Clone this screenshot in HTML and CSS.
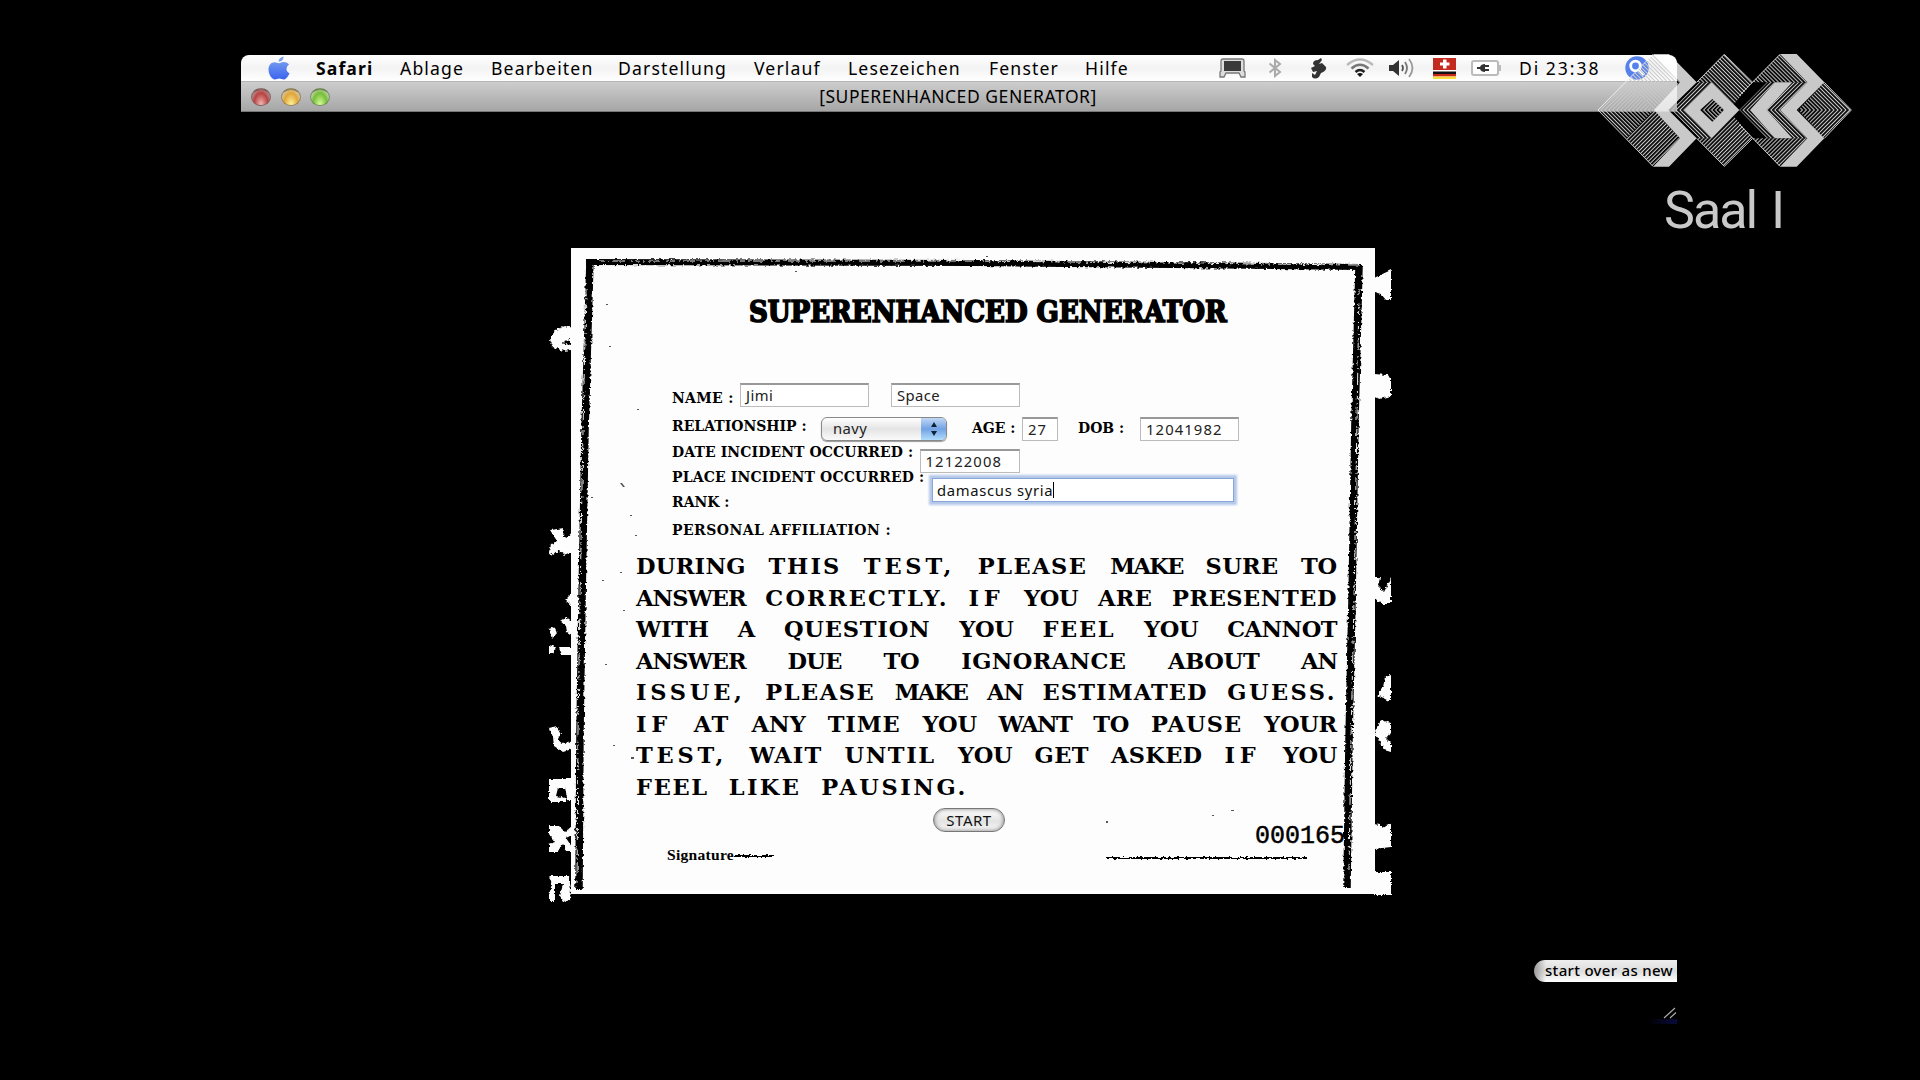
FILE: index.html
```
<!DOCTYPE html>
<html lang="de">
<head>
<meta charset="utf-8">
<title>[SUPERENHANCED GENERATOR]</title>
<link rel="stylesheet" href="styles.css">
</head>
<body>
<div class="screen">
  <header class="menubar">
    <svg class="apple" viewBox="0 0 22 24"><defs><linearGradient id="ap" x2="0" y2="1"><stop offset="0" stop-color="#7fa8ef"/><stop offset="1" stop-color="#3c63ee"/></linearGradient></defs><path fill="url(#ap)" d="M15.500 0.500C15.800 3.500 13.500 5.700 10.700 5.700 10.600 3 12.900 1 15.500 0.500ZM11 7.200C12.500 7.200 13.700 6 16 6 18 6 20 7 21 8.700 17.500 10.700 17.800 15.600 21.500 17.200 20.300 20.300 18 23.500 15.700 23.500 14 23.500 13.200 22.600 11.300 22.600 9.300 22.600 8.600 23.500 6.900 23.500 3.700 23.500 0.500 18 0.500 13.500 0.500 9 3.300 6.200 6.400 6.200 8.400 6.200 9.700 7.200 11 7.200Z"/></svg>
    <nav class="menus"><b>Safari</b><span>Ablage</span><span>Bearbeiten</span><span>Darstellung</span><span>Verlauf</span><span>Lesezeichen</span><span>Fenster</span><span>Hilfe</span></nav>
    <div class="status">
      <svg width="27" height="20" viewBox="0 0 27 20"><path fill="#ddd" stroke="#777" stroke-width="1.300" d="M4 1H23Q25 1 25 3V13L26 14V19H22L20 15H7L5 19H1V14L2 13V3Q2 1 4 1Z"/><path fill="#3a3a3a" d="M5 3H22V13H5Z"/></svg>
      <svg width="14" height="20" viewBox="0 0 14 20"><path fill="none" stroke="#aaa" stroke-width="2" d="M1.500 5.500 12 14 7 18V2L12 6 1.500 14.500"/></svg>
      <svg width="17" height="21" viewBox="0 0 17 21"><path fill="#333" d="M3 6Q3 2 8 2L11 0 12 2 9 6 12 5 16 9Q17 13 11 15L9 19Q5 22 2 19L2 15 5 17 7 13 3 14 1 10 5 8Z"/></svg>
      <svg width="30" height="20" viewBox="0 0 30 20"><g fill="none" stroke-width="2.500"><path stroke="#bbb" d="M2 7Q15-4 28 7"/><path stroke="#777" d="M6.500 10.500Q15 3 23.500 10.500"/><path stroke="#222" d="M10.500 14Q15 10 19.500 14"/></g><path fill="#111" d="M12 16Q15 14 18 16L15 19Z"/></svg>
      <svg width="26" height="22" viewBox="0 0 26 22"><path fill="#333" d="M0 8H4L10 3V19L4 14H0Z"/><g fill="none" stroke="#555" stroke-width="1.800"><path d="M13 8Q15 11 13 14"/><path stroke="#777" d="M16 5Q20 11 16 17"/><path stroke="#999" d="M20 2Q27 11 20 20"/></g></svg>
      <svg width="23" height="21" viewBox="0 0 23 21"><path fill="#c32b20" d="M0 0H23V12H0Z"/><path fill="#fff" d="M10 1.500H13.500V4.500H16.500V7.500H13.500V10.500H10V7.500H7V4.500H10Z"/><path fill="#fff" d="M0 12H23V13.500H0Z"/><path fill="#111" d="M0 13.500H23V16H0Z"/><path fill="#c8271e" d="M0 16H23V18.500H0Z"/><path fill="#f6dc3c" d="M0 18.500H23V21H0Z"/></svg>
      <svg width="31" height="16" viewBox="0 0 31 16"><rect x="1" y="1" width="26" height="14" rx="2" fill="#fff" stroke="#bbb" stroke-width="2"/><path fill="#bbb" d="M28 5H30V11H28Z"/><path fill="#333" d="M6 7H9Q10 4 14 4V5H18V7H14V9H18V11H14V12Q10 12 9 9H6Z"/></svg>
      <span class="clock">Di 23:38</span>
      <svg width="26" height="24" viewBox="0 0 26 24"><circle cx="13" cy="12" r="11.700" fill="#5680ea"/><circle cx="11.500" cy="10" r="4.800" fill="none" stroke="#fff" stroke-width="2.800"/><path stroke="#fff" stroke-width="3" d="M15 13.500 20 19"/></svg>
    </div>
  </header>
  <div class="titlebar">
    <div class="lights"><i class="red"></i><i class="amber"></i><i class="green"></i></div>
    <div class="title">[SUPERENHANCED GENERATOR]</div>
  </div>
  <main class="page">
    <section class="paper">
      <svg class="scan" viewBox="540 240 860 680">
        <defs>
          <filter id="rough" x="540" y="240" width="860" height="680" filterUnits="userSpaceOnUse"><feTurbulence type="fractalNoise" baseFrequency=".35" numOctaves="2" seed="4"/><feDisplacementMap in="SourceGraphic" scale="4" xChannelSelector="R" yChannelSelector="G"/></filter>
        </defs>
        <path class="sheet" d="M571 248H1375V894H571Z"/>
        <g filter="url(#rough)">
          <path class="ink" d="M586 262 975 263 1362 267" stroke-width="6"/>
          <path class="ink" d="M590 260 585 430 582 600 580 730 579 889" stroke-width="7.500"/>
          <path class="ink" d="M1359 266 1355 420 1352 600 1349 740 1347 888" stroke-width="7.500"/>
          <path class="wear" d="M600 261 975 261 1360 265"/>
          <path class="wear" d="M586 290 583 430 580 600 578 730 577 885"/>
          <path class="wear" d="M1359 290 1357 420 1354 600 1351 740 1349 870"/>
          <path class="ink" d="M735 856H773M1106 858H1307" stroke-width="2.200"/>
          <path class="chip" fill-rule="evenodd" d="M550 340 555 330 565 326 572 328V350L563 351 553 347ZM561 343 570 339V345Z"/>
          <path class="chip" d="M550 530l14-2-1 8 4 2 5-6v20l-7 3-6-5-7 6-3-4 2-8 6-3ZM565 600l7-7v13ZM560 621l6-4 6 4v14l-5-3-1-6ZM549 629l5-2 3 6-5 6ZM549 645l7 2-3 6-4 0ZM559 647h13v8h-10ZM549 728l8-2 4 7-3 6 6 5 8-4v9l-9 3-9-6-1-9ZM549 779h23v22h-4l-3-13h-7l-2 8 10 2v4h-17ZM549 826h10l6 6 7-6v9l-6 3 6 9v4h-6l-3-7-6 8h-8v-8l6-2-6-8ZM549 876h20l2 14-1 10-6 2-4-6 3-12h-8v18h-6v-8l3-9Z"/>
          <path class="chip" d="M1374 278 1391 270V300H1386L1381 294 1374 292ZM1374 374 1388 375 1391 380V396L1380 399 1374 397ZM1374 578h6l-2 8 6 6 7-14v26h-8l-9-6ZM1378 694l5-8 2-9 6-2v25l-4 2-2-4-8-2ZM1374 734l7-14 10 3v9l-5 6 5 5v9l-7-2-5-10ZM1374 824l6 1 3 3 8-5v24l-17 2ZM1374 872h17v23h-17Z"/>
        </g>
        <path class="speck" d="M606 304h2v1h-2ZM609 346h2v1h-2ZM637 409h2v1h-2ZM620 483l2 0 3 4-2 0ZM591 497h2v1h-2ZM630 515h2v1h-2ZM635 535h2v1h-2ZM602 580h2v1h-2ZM620 572h2v1h-2ZM623 610h2v1h-2ZM605 664h2v1h-2ZM613 745h2v1h-2ZM631 757h3v2h-3ZM795 271h2v1h-2ZM986 256h2v1h-2ZM1106 821h2v2h-2ZM1212 815h2v1h-2ZM1231 810h3v1h-3Z"/>
      </svg>
      <h1>SUPERENHANCED GENERATOR</h1>
      <form class="form">
        <div class="row name"><label>NAME :</label><span class="field">Jimi</span><span class="field second">Space</span></div>
        <div class="row relation"><label>RELATIONSHIP :</label><span class="select"><span>navy</span><i><svg width="8" height="14" viewBox="0 0 8 14"><path fill="#123" d="M4 0 7 5H1ZM4 14 7 9H1Z"/></svg></i></span><label class="age">AGE :</label><span class="field num">27</span><label class="dob">DOB :</label><span class="field num dobf">12041982</span></div>
        <div class="row date"><label>DATE INCIDENT OCCURRED :</label><span class="field num">12122008</span></div>
        <div class="row place"><label>PLACE INCIDENT OCCURRED :</label><span class="field focus">damascus syria<i class="caret"></i></span></div>
        <div class="row rank"><label>RANK :</label></div>
        <div class="row affil"><label>PERSONAL AFFILIATION :</label></div>
      </form>
      <div class="notice">
        <p>DURING THIS TEST, PLEASE MAKE SURE TO</p>
        <p>ANSWER CORRECTLY. IF YOU ARE PRESENTED</p>
        <p>WITH A QUESTION YOU FEEL YOU CANNOT</p>
        <p>ANSWER DUE TO IGNORANCE ABOUT AN</p>
        <p>ISSUE, PLEASE MAKE AN ESTIMATED GUESS.</p>
        <p>IF AT ANY TIME YOU WANT TO PAUSE YOUR</p>
        <p>TEST, WAIT UNTIL YOU GET ASKED IF YOU</p>
        <p class="last">FEEL LIKE PAUSING.</p>
      </div>
      <button class="start">START</button>
      <footer class="foot"><span class="sign">Signature</span><span class="serial">000165</span></footer>
    </section>
    <div class="over">start over as new</div>
    <svg class="grip" viewBox="0 0 14 12"><path stroke="#aaa" stroke-width="1.200" d="M1 11 12 1M7 11 13 5.500"/></svg>
    <div class="glow"></div>
  </main>
</div>
<div class="brand">
  <svg width="290" height="140" viewBox="0 0 870 420">
    <defs>
      <pattern id="dn" width="50" height="8.384" patternUnits="userSpaceOnUse" patternTransform="translate(53 210) rotate(45)"><path fill="currentColor" d="M0 0H50V3.200H0Z"/></pattern>
      <pattern id="up" width="50" height="8.384" patternUnits="userSpaceOnUse" patternTransform="translate(53 210) rotate(-45)"><path fill="currentColor" d="M0 5.184H50V8.384H0Z"/></pattern>
      <clipPath id="onbar"><path d="M0 0H291V216H0Z"/></clipPath>
      <clipPath id="offbar"><path d="M291 0H870V420H0V216H291Z"/></clipPath>
      <g id="mark">
        <path fill="url(#up)" d="M53 210 138 125 222 210ZM275 210 358 127 395 127 313 210ZM478 210 561 127H585L510 210ZM560 210 635 127H682L600 210ZM360 210 397 177 432 210Z"/>
        <path fill="url(#dn)" d="M53 210 138 295 222 210ZM275 210 358 295 395 295 313 210ZM478 210 561 295H585L510 210ZM560 210 635 295H682L600 210ZM360 210 397 245 432 210Z"/>
        <path fill="url(#dn)" d="M138 125 219 42 300 127 222 210ZM350 127 433 42 518 127 462 192 395 127ZM516 127 600 42 682 127ZM655 210 733 127 815 210Z"/>
        <path fill="url(#up)" d="M138 295 219 380 300 295 222 210ZM350 295 433 380 518 295 462 230 395 295ZM516 295 600 380 682 295ZM655 210 733 295 815 210Z"/>
        <path fill="currentColor" d="M219 42H267L350 127 265 210 350 295 267 380H219L300 295 222 210 300 127ZM600 42H650L733 127 650 210 733 295 650 380H600L682 295 600 210 682 127ZM585 127H637L560 210 637 295H585L510 210Z"/>
        <path fill="currentColor" fill-rule="evenodd" d="M313 210 395 127 478 210 395 295ZM360 210 397 245 432 210 397 177Z"/>
        <path fill="none" stroke="currentColor" stroke-width="3" d="M219 43 54 210 219 379M350 127 433 43 518 127M350 295 433 379 518 295M600 43 478 167M600 379 478 253M733 127 814 210 733 295"/>
      </g>
    </defs>
    <use href="#mark" class="bright" clip-path="url(#onbar)"/>
    <use href="#mark" clip-path="url(#offbar)"/>
  </svg>
  <div class="hall">Saal I</div>
</div>
<script src="pitch.js"></script>
</body>
</html>
```
FILE: pitch.js
```
// Sets every word of the notice to a fixed typewriter pitch.
const PITCH = 18.45;
document.querySelectorAll('.notice p').forEach(line => {
  const words = line.textContent.split(' ');
  line.textContent = '';
  words.forEach((word, i) => {
    const span = document.createElement('span');
    span.textContent = word;
    if (i) line.append(' ');
    line.append(span);
  });
  line.querySelectorAll('span').forEach(span => {
    const n = span.textContent.length;
    const range = document.createRange();
    range.selectNodeContents(span);
    const width = range.getBoundingClientRect().width;
    span.style.letterSpacing = ((n * PITCH - 1 - width) / n).toFixed(3) + 'px';
  });
});
```
FILE: styles.css
```
*{box-sizing:border-box}
body{margin:0;width:1920px;height:1080px;overflow:hidden;background:#000;color:#000;font-family:"Noto Sans",sans-serif}
.screen{width:1436px;height:969px;margin:55px 0 0 241px;display:flex;flex-direction:column}
.menubar{height:26px;display:flex;align-items:center;background:linear-gradient(#fff,#f3f3f3 50%,#fff);border-radius:8px 8px 0 0;padding-left:27px;flex:none}
.apple{width:22px;height:24px}
.menus{display:grid;grid-template-columns:84px 91px 127px 136px 94px 141px 96px 60px;margin-left:26px;font-size:17.600px;letter-spacing:1.150px;line-height:26px;white-space:nowrap}
.menus b{font-weight:700;letter-spacing:1.100px}
.status{display:flex;align-items:center;margin-left:74px}
.status svg{flex:none}
.status svg+svg{margin-left:22px}
.status svg:nth-child(3){margin-left:28px}
.status svg:nth-child(4){margin-left:18px}
.status svg:nth-child(5){margin-left:14px}
.status svg:nth-child(6){margin-left:18px}
.status svg:nth-child(7){margin-left:15px}
.clock{width:105px;margin-left:17px;font-size:17.500px;letter-spacing:2px;word-spacing:-1px;line-height:26px;white-space:nowrap}
.titlebar{height:31px;flex:none;display:grid;grid-template-columns:120px 1fr 120px;align-items:center;background:linear-gradient(#cdcdcd,#a6a6a6);border-top:1px solid #b5b5b5;border-bottom:1px solid #777}
.lights{display:flex;gap:9.500px;padding-left:10px}
.lights i{width:20px;height:18px;border-radius:50%;border:1px solid #5558;border-top:2px solid #3338}
.red{background:radial-gradient(ellipse at 50% 95%,#f3b9b4,#b84343 55%,#b88 80%)}
.amber{background:radial-gradient(ellipse at 50% 95%,#fff39a,#e0a53a 55%,#ddc99a 80%)}
.green{background:radial-gradient(ellipse at 50% 95%,#d6ff9a,#77bd3a 55%,#bcd6a0 80%)}
.title{text-align:center;font-size:17.500px;letter-spacing:.55px;line-height:27px;white-space:nowrap;margin-left:-2px}
.page{flex:1;display:flex;flex-direction:column;padding-top:136px}
.paper{position:relative;width:804px;height:646px;flex:none;margin-left:330px;padding:47px 38px 0 65px;display:flex;flex-direction:column}
.scan{position:absolute;left:-31px;top:-8px;width:860px;height:680px}
.sheet{fill:#fdfdfd}
.ink{fill:none;stroke:#000}
.wear{fill:none;stroke:#eee;stroke-width:1;stroke-dasharray:5 3 1 4 12 6 2 2}
.chip{fill:#fdfdfd}
.speck{fill:#555}
h1,.form,.notice,.start,.foot{position:relative}
h1{margin:0 0 0 113px;height:34px;font:700 29px/34px "DejaVu Serif",serif;font-stretch:condensed;-webkit-text-stroke:1.600px #000;white-space:nowrap}
.form{margin:54px 0 0 36px}
.row{display:flex;align-items:flex-start}
label{font:700 14px/16px "DejaVu Serif",serif;white-space:nowrap;flex:none}
.field{flex:none;width:129px;height:24px;border:1px solid #bbb;border-top:2px solid #999;background:#fff;padding-left:5px;font-size:14.800px;line-height:21px;letter-spacing:.4px;white-space:nowrap;color:#222}
.num{letter-spacing:1.100px;padding-left:5px}
.name{height:34px}
.name label{width:68px;margin-top:7px;letter-spacing:.3px}
.second{margin-left:22px}
.relation{height:24px}
.relation label:first-child{width:149px;margin-top:1px}
.relation .age{width:50px;margin:3px 0 0 25px}
.relation .age+.field{width:36px}
.relation .dob{width:62px;margin:3px 0 0 20px}
.relation .dobf{width:99px}
.select{width:126px;height:24px;display:flex;justify-content:space-between;align-items:center;border:1px solid #888;border-radius:6px;background:linear-gradient(#fff,#e4e4e4 50%,#fafafa);font-size:14.800px;letter-spacing:.4px;padding-left:11px;overflow:hidden;box-shadow:0 1px 1px #999;color:#222}
.select span{margin-top:-2px}
.select i{width:25px;height:24px;display:flex;align-items:center;justify-content:center;background:linear-gradient(#c9dcf6,#72a2e4 50%,#b6e2ff)}
.date{height:32px}
.date label{width:247.500px;margin-top:3px;letter-spacing:.1px}
.date .field{width:100px;margin-top:8px}
.place{height:21px}
.place label{width:260px;margin-top:-4px;letter-spacing:.15px}
.place .focus{width:302px;height:24px;margin-top:5px;padding-left:4px;border:1px solid #8aa6d8;box-shadow:0 0 2px 3px #b4c8ea;letter-spacing:.68px;color:#111;display:flex;align-items:center}
.caret{width:1px;height:16px;background:#000}
.rank{height:28px}
.affil label{letter-spacing:.45px}
.notice{margin-top:13px;font:700 22.500px/31.500px "DejaVu Serif",serif}
.notice p{margin:0;height:31.500px;text-align:justify;text-align-last:justify;white-space:nowrap}
.notice .last{text-align-last:left;word-spacing:12px}
.start{align-self:flex-start;margin:5px 0 0 297px;width:72px;height:24px;padding:0;border:1px solid #777;border-radius:12px;background:linear-gradient(#fff,#e3e3e3 55%,#f8f8f8);box-shadow:inset 0 0 4px #777;font:15px/21px "Noto Sans",sans-serif;letter-spacing:.5px;color:#111}
.foot{display:flex;align-items:flex-start;justify-content:space-between;margin:-9px -8px 0 31px}
.sign{font:700 15.600px/18px "Liberation Serif",serif;margin-top:23px;letter-spacing:.25px}
.serial{font:700 25px/28px "Liberation Mono",monospace;font-weight:400;-webkit-text-stroke:.5px #000}
.over{align-self:flex-end;margin-top:66px;width:143px;height:22px;padding-left:11px;border-radius:11px 0 0 11px;background:linear-gradient(90deg,#999,#eee0 12px),linear-gradient(#eee,#ddd 50%,#fff);font-size:15px;font-weight:500;line-height:21px;letter-spacing:.3px;white-space:nowrap}
.grip{align-self:flex-end;width:14px;height:12px;margin-top:25px}
.glow{align-self:flex-end;width:30px;height:5px;background:linear-gradient(90deg,#000,#0a0a3c)}
.brand{position:absolute;left:1580px;top:40px;width:290px;color:#c9c9c9}
.brand svg{display:block}
.bright{color:#ffffffb8}
.hall{margin:1px 0 0 84px;font:400 52px/60px Roboto,sans-serif;letter-spacing:-2px;word-spacing:4px;white-space:nowrap}
```
